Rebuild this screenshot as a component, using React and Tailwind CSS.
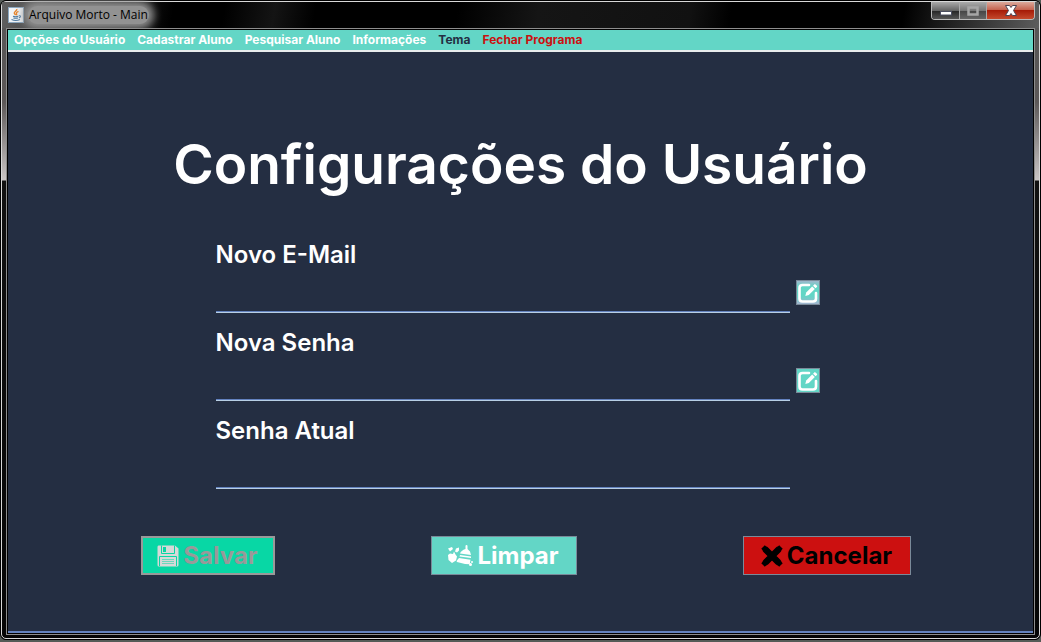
import React from "react";

const menuItems = [
  { label: "Opções do Usuário", color: "text-white" },
  { label: "Cadastrar Aluno", color: "text-white" },
  { label: "Pesquisar Aluno", color: "text-white" },
  { label: "Informações", color: "text-white" },
  { label: "Tema", color: "text-[#242e42]" },
  { label: "Fechar Programa", color: "text-[#cc1010]" },
];

function JavaIcon() {
  return (
    <svg viewBox="0 0 16 16" className="h-4 w-4 shrink-0" aria-hidden="true">
      <rect x="0.5" y="0.5" width="15" height="15" fill="#f1f4f7" stroke="#8ba7bf" />
      <path d="M8.800 2c.6 1.800-3 2.700-2.500 4.300.2.700 1 1.100 1.300 1.800M10.500 4.300c-1.500.7-2.500 1.400-2 2.400.3.500.4.900-.1 1.500" fill="none" stroke="#e8852c" strokeWidth="1.400" />
      <path d="M5 9.200c1.500.6 4 .5 5.300 0M5.400 10.900c1.500.5 3.300.5 4.500 0M3.500 12.500c2.300 1 6.500.9 8.500 0M10.800 8.800c2-.5 2.400 1.400.1 2.200" fill="none" stroke="#4f7ba1" strokeWidth="1.100" />
    </svg>
  );
}

function EditIcon() {
  return (
    <svg viewBox="0 0 20 20" className="h-5 w-5 shrink-0" aria-hidden="true">
      <path d="M11 2H4.500Q1.500 2 1.500 5V15.500Q1.500 18.500 4.500 18.500H15Q18 18.500 18 15.500V10" fill="none" stroke="#fff" strokeWidth="2.600" strokeLinecap="round" />
      <path d="M7.300 13l.9-3.500 6-6 2.600 2.600-6 6z" fill="#fff" />
      <path d="M15 2.700l1.300-1.300q.6-.6 1.200 0l1.400 1.400q.6.6 0 1.200l-1.300 1.300z" fill="#fff" />
    </svg>
  );
}

function SaveIcon() {
  return (
    <svg viewBox="0 0 22 22" className="h-[22px] w-[22px] shrink-0" aria-hidden="true">
      <path d="M1.500 0.500H18L21.500 3.500V20Q21.500 21.500 20 21.500H2Q.5 21.500.5 20V2Q.5.5 1.500.5Z" fill="#d6d9d8" />
      <path d="M4.500.5V8.500H17.500V.5" fill="none" stroke="#08d7a5" strokeWidth="1" />
      <rect x="6" y="2" width="3" height="5" fill="#08d7a5" />
      <path d="M2.500 21V11.500H19.500V21" fill="none" stroke="#08d7a5" strokeWidth="1" />
      <path d="M5 14.500H17M5 16.500H17M5 18.500H17" fill="none" stroke="#6bd8bd" strokeWidth="1" />
    </svg>
  );
}

function CleanIcon() {
  return (
    <svg viewBox="0 0 25 22" className="h-[22px] w-[25px] shrink-0" fill="#fff" aria-hidden="true">
      <path d="M0 3.500l4-1.500 1 2-3 2.500zM8 3.500l3-1v3l-2 2-2-1zM0 10l2-1.500 3 .5 1-2.500 1.500 3 1.500 2-1 4-4 2.500-3.500-3z" />
      <path d="M17.500 1Q17.500 0 18.500 0t1 1V4l2.500 2.500 1 3.500-11-1.500q1-3 5.500-4.500zM12 10l11 1.500v1.500L11.500 11.500zM11 13l11.500 1.800-.8 4.400-4.700-.2L9 17l-.5-1z" />
      <circle cx="22.500" cy="19.500" r="1.500" />
      <circle cx="24" cy="17" r="1" />
    </svg>
  );
}

function CancelIcon() {
  return (
    <svg viewBox="0 0 22 22" className="h-[22px] w-[22px] shrink-0" aria-hidden="true">
      <path d="M3.800 3.800L18.200 18.200M18.200 3.800L3.800 18.200" stroke="#000" strokeWidth="5" strokeLinecap="square" />
      <path d="M5 5L17 17M17 5L5 17" stroke="#000" strokeWidth="6.500" strokeLinecap="round" />
    </svg>
  );
}

function Field({ id, label, type, editable, editClass }) {
  return (
    <div className="grid grid-cols-[minmax(0,1fr)_24px] gap-x-1.5">
      <label htmlFor={id} className="col-span-2 text-2xl leading-8">{label}</label>
      <input id={id} type={type} className="mt-0.5 h-10 w-full border-b border-[#b8cfe5] bg-transparent px-1 text-xl shadow-[inset_0_-1px_0_#6382bf] outline-none" />
      {editable && (
        <button type="button" aria-label={`Editar ${label}`} className={`mt-[9px] flex h-[25px] w-6 items-center justify-center border border-[#7a8a99] ${editClass}`}>
          <EditIcon />
        </button>
      )}
    </div>
  );
}

export default function App() {
  return (
    <div className="flex min-h-screen flex-col bg-[#555b57] pb-0.5 font-['Arial_Rounded_MT_Bold','Inter','Liberation_Sans',sans-serif]">
      <div className="flex grow flex-col rounded-md border border-black bg-black">
        <div className="flex grow flex-col rounded-[5px] border border-[#d8d8d8] bg-[linear-gradient(to_bottom,#555_0px,#5c5858_100px,#c9c5c5_178px,#111_179px,#050505_100%)] px-1 pb-[3px]">
          <header className="-mx-1 flex h-[26px] items-start justify-between bg-[linear-gradient(100deg,#606060_0px,#222_110px,#000_170px,#000_220px,#141414_270px,#000_310px,#000_450px,#151515_530px,#111_680px,#000_720px,#000_890px,#606060_1030px)] pl-1.5">
            <div className="flex items-center gap-1 pt-1 font-['Open_Sans','Liberation_Sans',sans-serif] text-xs leading-[18px] text-black">
              <JavaIcon />
              <h2 className="rounded-full bg-[#929292] px-px shadow-[0_0_9px_5px_#929292]">Arquivo Morto - Main</h2>
            </div>
            <div className="mr-1 flex h-[18px] overflow-hidden rounded-b border border-t-0 border-[#b9b9b9]">
              <button type="button" aria-label="Minimizar" className="flex w-7 items-center justify-center border-r border-[#aaa] bg-[linear-gradient(#aaa,#666_50%,#242424_51%,#555)]">
                <svg viewBox="0 0 12 12" className="h-3 w-3"><rect x=".5" y="6.500" width="11" height="3.500" fill="#fff" stroke="#4b4e60" /></svg>
              </button>
              <button type="button" aria-label="Maximizar" className="flex w-[27px] items-center justify-center border-r border-[#aaa] bg-[linear-gradient(#aaa,#777_50%,#444_51%,#666)]">
                <svg viewBox="0 0 12 10" className="h-2.5 w-3"><rect x="1.500" y="1.500" width="9" height="7" fill="none" stroke="#a6a6a6" strokeWidth="2.500" /></svg>
              </button>
              <button type="button" aria-label="Fechar" className="flex w-[47px] items-center justify-center bg-[linear-gradient(#dca99b,#c66450_45%,#a61c08_50%,#c44a2d)]">
                <svg viewBox="0 0 12 11" className="h-[11px] w-3"><path d="M.5.5H4.500L6 2.500 7.500.5h4L8.500 5.500l3 5h-4L6 8.500l-1.500 2h-4l3-5z" fill="#fff" stroke="#4b4350" /></svg>
              </button>
            </div>
          </header>
          <div className="flex grow flex-col border border-[#8d8d8d]">
            <div className="flex grow flex-col border border-black bg-[#242e42] text-white">
              <nav className="flex h-[22px] items-center gap-3 border-b-2 border-[#e8ecec] bg-[#63d6c6] px-1.5 text-xs font-bold">
                {menuItems.map((item) => (
                  <button key={item.label} type="button" className={item.color}>{item.label}</button>
                ))}
              </nav>
              <main className="flex grow flex-col border-b-2 border-[#6382bf] px-8 pt-20 pb-14 font-semibold">
                <h1 className="text-center text-[55px] leading-[64px]">Configurações do Usuário</h1>
                <form className="mt-[43px]">
                  <div className="mx-auto flex max-w-[610px] flex-col gap-3.5 pr-1.5">
                    <Field id="email" label="Novo E-Mail" type="email" editable editClass="bg-[linear-gradient(#9fb6cc,#63d6c6_25%,#63d6c6_65%,#a2b4cf)]" />
                    <Field id="senha" label="Nova Senha" type="password" editable editClass="bg-[#63d6c6]" />
                    <Field id="atual" label="Senha Atual" type="password" />
                  </div>
                  <div className="mx-auto mt-[47px] flex max-w-[780px] justify-between pl-2.5 text-2xl font-bold">
                    <div className="flex gap-[156px]">
                      <button type="button" disabled className="flex h-[39px] w-[134px] items-center justify-center gap-1 border-2 border-[#999] bg-[#08d7a5] text-[#999]"><SaveIcon />Salvar</button>
                      <button type="reset" className="flex h-[39px] w-[146px] items-center justify-center gap-1 border border-[#7a8a99] bg-[#63d6c6]"><CleanIcon />Limpar</button>
                    </div>
                    <button type="button" className="flex h-[39px] w-[168px] items-center justify-center gap-1 border border-[#7a8a99] bg-[#cc1010] text-black"><CancelIcon />Cancelar</button>
                  </div>
                </form>
              </main>
            </div>
          </div>
        </div>
      </div>
    </div>
  );
}
